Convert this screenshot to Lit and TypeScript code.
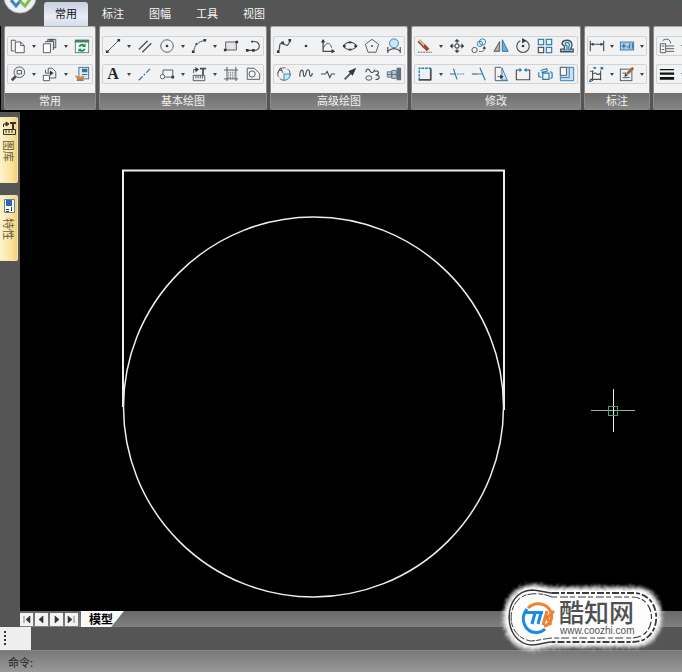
import { LitElement, html, svg, css } from "lit";
import type { SVGTemplateResult } from "lit";
import { customElement, property } from "lit/decorators.js";

// Ribbon icons, each on an 18 x 18 grid.
// Classes: k = dark stroke, b = blue stroke, t = thin, w = heavy, fk / fl = dark, light fill.
const icons: Record<string, SVGTemplateResult> = {
  copy: svg`<path class="k t" d="M5 14.5H1.5V2.5H6V4"/><path class="k" fill="#fafafa" d="M6 4.5h6l4 4V16.5H6z"/><path class="k t" d="M12 4.5v4h4"/>`,
  paste: svg`<path class="k" fill="#ccc" d="M6.5 5V1.5h9V11H13"/><path class="k" fill="#e6e6e6" d="M4 5V4h9v9h-1"/><path class="k" fill="#fff" d="M1.5 6.5h8v10h-8z"/><path class="k w" d="M8 2h5"/>`,
  refresh: svg`<rect x="1.5" y="2.5" width="15" height="14" fill="#f3faf5" stroke="#5c7f72"/><path fill="#477f72" d="M1 2h16v3H1z"/><path stroke="#1c9152" stroke-width="2" fill="none" d="M6 10c1-3 4-3 6-1M12 12c-1 3-4 3-6 1"/><path fill="#1c9152" d="M13 6v4H9zM5 16v-4h4z"/>`,
  zoom: svg`<path class="k" stroke-width="3" d="M6.5 11.5 2 16"/><circle class="k" fill="#e8eef3" cx="10.5" cy="7" r="6"/><path class="k t" d="M8 5h5v4H8z"/>`,
  block: svg`<path class="k" fill="#eee" d="M8.5 13.5H15.5V6.5l-4-4H7v5"/><path class="k" fill="#fff" d="M1.5 10.5h7v6h-7z"/><path class="k" d="M4 4v4h6"/><path class="fk" d="M9 5l4 3-4 3z"/>`,
  brush: svg`<rect x="5.5" y="1.5" width="11" height="13" fill="#dceaf6" stroke="#397199"/><path fill="#397199" d="M9 3h6v4H9zM9 9h6v1H9z"/><path fill="#d28a43" d="M1 10l5 2 6-1-2 5H4z"/><path stroke="#72451e" d="M3 16h8"/>`,
  line: svg`<path class="k" d="M3 15 15 3"/><path class="fk" d="M1 14h3v3H1zM14 1h3v3h-3z"/>`,
  parallel: svg`<path class="k" stroke-width="1.5" d="M2 13 12 3M6 16 16 6"/>`,
  circle: svg`<circle class="k" cx="9" cy="9" r="7"/><circle class="fk" cx="9" cy="9" r="1.5"/>`,
  arc: svg`<path class="k" d="M3 15C4 8 8 4 15 3"/><path class="fk" d="M1 14h3v3H1zM5 6h2v2H5zM14 1h3v3h-3z"/>`,
  rect: svg`<path class="k" fill="#e4e4e4" d="M3 4.5h12v9H3z"/><path class="fk" d="M1 12h3v3H1zM14 3h3v3h-3z"/>`,
  pline: svg`<path class="k" stroke-width="1.3" d="M2 14h8M9 4c9-1 9 10 2 10"/><path class="fk" d="M1 12.5h3v3H1zM8 12.5h3v3H8zM7 3h2v2H7z"/>`,
  text: svg`<text x="9" y="15" class="glyph">A</text>`,
  axis: svg`<path stroke="#306499" stroke-width="1.3" stroke-dasharray="6 2 2 2" fill="none" d="M2 16 16 2"/>`,
  leader: svg`<path class="k" d="M4.5 10V4.5h11v8H7"/><circle class="k" fill="#fff" cx="4" cy="12" r="2.5"/><path class="fk" d="M14 11h3v3h-3z"/>`,
  library: svg`<path class="k" fill="#eee" d="M2.5 10.5h13v6h-13z"/><path class="k t" d="M5.500 11v3M8 11v3M10.500 11v3M13 11v3"/><path class="k w" d="M10 3h7M13.500 3v7"/><path class="k" d="M3 8V4h4"/><path class="fk" d="M5 1l4 3-4 3z"/>`,
  hatch: svg`<path class="k" fill="#e5e5e5" d="M4.5 1v16M14.5 1v16M1 4.5h16M1 14.5h16"/><path class="k t" stroke-dasharray="1 1" d="M6 7h7M6 9h7M6 11h7M6 13h7"/>`,
  region: svg`<path class="k" d="M2.5 2.5h8l6 6v6.5h-14z"/><circle class="k" cx="8" cy="9" r="3.5"/>`,
  spline: svg`<path class="k" stroke-width="1.3" d="M2 15C6 13 2 5 7 6s5 6 9-3"/><path class="fk" d="M1 14h3v3H1zM6 4h3v3H6zM14 1h3v3h-3z"/>`,
  point: svg`<circle class="fk" cx="9" cy="9" r="1.5"/>`,
  formula: svg`<path class="k" stroke-width="1.5" d="M3.5 3v12H16"/><path class="k" d="M4 11C7 4 12 5 13 11"/><path class="fk" d="M1 5l2.5-4L6 5zM13 12.5l4 2.5-4 2.5z"/>`,
  ellipse: svg`<ellipse class="k" stroke-width="1.3" cx="9" cy="9" rx="6.5" ry="4"/><path class="fk" d="M1 7.5h3v3H1zM14 7.5h3v3h-3zM7.5 4h3v2h-3zM7.5 12h3v2h-3z"/>`,
  polygon: svg`<path class="k" d="M9 1.500l7.500 5.500-3 9H4.500l-3-9z"/><circle class="fk" cx="9" cy="9" r="1"/>`,
  bulb: svg`<circle class="b fl" cx="9" cy="6" r="5"/><path class="k" stroke-width="1.3" d="M2 10v7M16 10v7M2 15c4-4 10-4 14 0"/>`,
  detail: svg`<circle class="k" cx="9" cy="9" r="7" stroke-dasharray="7 2"/><path class="b fl" d="M9 9h7c0 4-3 7-7 7z"/><path class="k" d="M2 8l3-6 3 6M3 5h4"/>`,
  wave: svg`<path class="k" stroke-width="1.3" d="M2 12C2 3 6 3 6 8s2 5 3 0 4-5 4 0 3 4 3 0"/>`,
  brk: svg`<path class="k" stroke-width="1.3" d="M1 9h5l2-3 3 7 2-4h4"/>`,
  arrow: svg`<path class="k" stroke-width="2" d="M3 15l8-8"/><path class="fk" d="M7 6l9-4-4 9z"/>`,
  curve: svg`<path class="k" stroke-width="1.3" d="M2 7c1-6 4-3 5-1s4 2 5-2M12 6c5-2 6 4 1 4 6 0 5 6 0 5"/><ellipse class="k" cx="5.5" cy="13.5" rx="3.5" ry="2.5"/>`,
  shaft: svg`<path fill="#b9cbd8" stroke="#5c6c78" d="M1.500 6.5h5v6h-5zM6.500 5h5v9h-5z"/><path fill="#65717a" d="M12 2h5v14h-5z"/><path stroke="#5c6c78" d="M1 9.500h12"/>`,
  erase: svg`<path stroke="#7a4e36" stroke-width="4" d="M2 3l6 6"/><path stroke="#ecc08a" stroke-width="2" d="M2 2l7 7"/><path fill="#a7442d" d="M9 7l5 5-3 3-5-5z"/><path class="k t" stroke-dasharray="2 1" d="M1 16h16"/>`,
  move: svg`<path class="k" stroke-width="1.3" d="M9 3v12M3 9h12"/><path class="fk" d="M6 4l3-3 3 3zM6 14l3 3 3-3zM4 6L1 9l3 3zM14 6l3 3-3 3z"/><rect x="7" y="7" width="4" height="4" fill="#fff" class="k t"/>`,
  clone: svg`<circle class="b" cx="13" cy="4.500" r="3.5"/><circle class="b" cx="10" cy="6.500" r="3"/><circle class="k" cx="4" cy="13.500" r="3"/><path class="k" d="M9 15c5 1 6-1 6-4"/><path class="fk" d="M13 12l2-3 2 3z"/>`,
  mirror: svg`<path fill="#aaa" stroke="#555" d="M7.5 4v11H1z"/><path fill="#66b0df" stroke="#2b6a9b" d="M10.5 2v13H17z"/>`,
  rotate: svg`<path class="k" stroke-width="1.3" d="M6 3a7 7 0 1 0 6 0"/><path class="fk" d="M8 0l5 3-5 3z"/><circle class="fk" cx="9" cy="9" r="1.5"/>`,
  array: svg`<g class="b" stroke-width="1.3"><rect x="1.5" y="1.5" width="6" height="6"/><rect x="10.5" y="1.5" width="6" height="6"/><rect x="10.5" y="10.5" width="6" height="6"/></g><rect class="k" stroke-width="1.3" x="1.5" y="10.5" width="6" height="6"/>`,
  offset: svg`<path class="k" fill="#d5e6f0" stroke-width="1.5" d="M2 15.5h14v-3h-3c3-4 2-10-4-10S2 7 6 9v3.500H2z"/><path class="b" stroke-width="1.3" d="M4 13.500h5V9C6 8 7 5 9 5s4 2 2 5v3.500h3"/>`,
  stretch: svg`<path fill="#e6f1f8" stroke="#287cad" stroke-width="1.5" stroke-dasharray="3 1" d="M2.500 16V2.500H16"/><path class="k" stroke-width="2" d="M2 15.5h14M15.500 3v13"/>`,
  trim: svg`<path class="b" stroke-width="1.3" d="M5 3l4 12"/><path class="k" d="M1 9h6"/><path class="b" stroke-dasharray="2 1" d="M9 9h8"/>`,
  extend: svg`<path class="b" stroke-width="1.3" d="M10 2l6 14"/><path class="k" stroke-width="1.3" d="M1 9h7"/><path class="b" d="M8 9h5"/>`,
  taper: svg`<path class="k" d="M9 1.5H2.5v15H17"/><path class="b fl" d="M10 2l6 14h-6z"/><path class="k" d="M5 12h5"/><path class="fk" d="M8 9.5l4 2.5-4 2.5z"/>`,
  split: svg`<path class="k" stroke-width="1.3" d="M4 4.5H1.5v11h15v-11H14"/><path class="b" stroke-width="1.3" d="M3 4.5h4M11 4.5h4"/><path fill="#287cad" d="M5 2l3 2.5L5 7zM13 2l-3 2.5L13 7z"/>`,
  explode: svg`<path class="b" stroke-width="1.3" d="M6.500 8h7v7h-7zM4 5l7-2 1 3M2 7v5l3 1M15 6l2 2v5l-2 1M5 7l6-1"/>`,
  scale: svg`<path class="b" fill="#c9e0f0" d="M1.5 1.5h15v15h-15z"/><path class="k" fill="#f4f8fb" d="M1.5 1.5h7v9h-7z"/><path class="b" d="M11.500 2v11H2"/>`,
  dim: svg`<path class="k" stroke-width="1.3" d="M1.5 3v12M16.5 3v12M2 7h14"/><path class="fk" d="M2 7l3-2v4zM16 7l-3-2v4z"/>`,
  tolerance: svg`<rect x="1.5" y="4.5" width="15" height="9" fill="#a9d0ed" stroke="#397199"/><path stroke="#1f5380" fill="none" d="M3 9h5M5.5 6v6M10 11v-2M12 6v6M15 6v6"/>`,
  coord: svg`<path class="k" stroke-width="1.3" d="M4 5v12M1 15h13M5 9c3-4 4 4 8-1v8"/><path fill="#397199" d="M5 1h3v2H5zM13 1h3v3h-3zM0 16h3v2H0z"/><path class="k t" d="M1 6h4M13 5v4"/>`,
  edit: svg`<rect class="k" x="1.5" y="3.5" width="13" height="13" fill="#e7f1f7"/><path class="k t" d="M4 8h4M4 13h8"/><path stroke="#a3663a" stroke-width="3" d="M9 9l7-7"/><path fill="#444" d="M6 12l1-4 3 3z"/>`,
  props: svg`<path class="k" fill="#f6f6f6" d="M1.500 6.5h6v10h-6z"/><path class="k" d="M4 3c4-3 9-2 9 3M8 9h9M8 12h9M8 15h9M3 9h3M3 13h3"/>`,
  weight: svg`<path stroke="#111" stroke-width="1.5" d="M1 4h16"/><path stroke="#111" stroke-width="2.5" d="M1 8.500h16"/><path stroke="#111" stroke-width="3" d="M1 14h16"/>`,
};

interface Group {
  label: string;
  compact?: boolean;
  rows: string[];
}

// "v" stands for the drop-down caret of the tool before it.
const groups: Group[] = [
  { label: "常用", rows: ["copy v paste v refresh", "zoom v block v brush"] },
  { label: "基本绘图", rows: ["line v parallel circle v arc v rect pline", "text v axis leader v library v hatch region"] },
  { label: "高级绘图", rows: ["spline point formula ellipse polygon bulb", "detail wave brk arrow curve shaft"] },
  { label: "修改", rows: ["erase v move clone mirror rotate array offset", "stretch v trim extend taper split explode scale"] },
  { label: "标注", compact: true, rows: ["dim v tolerance v", "coord v edit v"] },
  { label: "", rows: ["props v", "weight v"] },
];

const reset = css`
  :host { box-sizing: border-box; }
  *, *::before, *::after { box-sizing: border-box; }
  button {
    margin: 0; padding: 0; border: 0; background: none;
    font: inherit; color: inherit; cursor: pointer;
    display: flex; align-items: center; justify-content: center;
  }
`;

@customElement("ribbon-group")
class RibbonGroup extends LitElement {
  @property({ attribute: false }) group!: Group;

  static styles = [reset, css`
    :host { display: block; flex: none; }
    .group {
      height: 100%; display: flex; flex-direction: column;
      border: 1px solid #8b8b8b; border-top-color: #aaa; border-radius: 2px; overflow: hidden;
    }
    .tools {
      flex: 1; background: linear-gradient(#ededed, #f5f5f5 30%, #f2f2f2);
      padding: 9px 2px; display: flex; flex-direction: column; justify-content: space-between;
    }
    .row {
      display: flex; height: 20px; border-radius: 2px;
      box-shadow: inset 0 0 0 1px #d0d3d6; background: #f1f2f3;
    }
    .tool { width: 22px; height: 20px; }
    .caret { width: 10px; height: 20px; }
    .compact .tool { width: 20px; }
    .caret::before {
      content: ""; border: 2px solid transparent; border-top: 3px solid #444; border-bottom: 0;
    }
    svg { width: 16px; height: 16px; display: block; }
    .k { stroke: #4b4f55; }
    .b { stroke: #287cad; }
    .k:not([fill]), .b:not([fill]) { fill: none; }
    .w { stroke-width: 2; }
    .fk { fill: #33363a; }
    .b.fl { fill: #cfe5f4; }
    .glyph { font: bold 18px "Liberation Serif", serif; text-anchor: middle; fill: #222; }
    .label {
      height: 16px; line-height: 15px; text-align: center; color: #f4f4f4;
      background: linear-gradient(#707070, #858585);
    }
  `];

  render() {
    const { label, rows, compact } = this.group;
    return html`<section class="group ${compact ? "compact" : ""}">
      <div class="tools">
        ${rows.map((row) => html`<div class="row">
          ${row.split(" ").map((name) => name === "v"
            ? html`<button class="caret" aria-label="更多"></button>`
            : html`<button class="tool" aria-label=${name}><svg viewBox="0 0 18 18">${icons[name]}</svg></button>`)}
        </div>`)}
      </div>
      <div class="label">${label}</div>
    </section>`;
  }
}

@customElement("site-mark")
class SiteMark extends LitElement {
  static styles = css`
    :host { display: block; }
    svg { display: block; width: 192px; height: 97px; }
    .name { font: 500 25px "Noto Sans CJK SC", sans-serif; fill: #505050; }
    .url { font: 10px "Liberation Sans", sans-serif; fill: #555; }
  `;
  render() {
    return html`<svg viewBox="0 0 192 97" role="img" aria-label="酷知网">
      <defs>
        <filter id="rough" x="-10%" y="-20%" width="120%" height="140%">
          <feTurbulence type="fractalNoise" baseFrequency="0.7" numOctaves="2" seed="4" result="n"/>
          <feDisplacementMap in="SourceGraphic" in2="n" scale="9" xChannelSelector="R" yChannelSelector="G"/>
          <feGaussianBlur stdDeviation="1"/>
        </filter>
      </defs>
      <path filter="url(#rough)" fill="#fff" stroke="#fff" stroke-opacity=".6" stroke-width="6"
        d="M42 12C50 11 55 14 63 14H145C178 14 178 70 145 70H63C56 70 50 73 42 73C7 73 6 13 42 12z"/>
      <path fill="#fdfdfd" d="M42 16H145C170 16 170 68 145 68H42C14 68 14 16 42 16z"/>
      <g fill="none" stroke="#3a3a3a">
        <path stroke-width="1.5" d="M62 67C56 67 50 70 42 70C12 69 11 16 42 15C50 15 55 18 62 18"/>
        <path stroke-width="1" stroke-dasharray="9 2 5 1" d="M62 63C52 64 47 66 40 66C14 60 17 26 36 20C44 18 52 18 62 22"/>
        <path stroke-width="1.8" stroke-dasharray="7 2 4 2" d="M62 18H143C174 18 174 67 143 67H62"/>
        <path stroke-width="1.2" stroke-dasharray="5 3 8 2" d="M62 22H142C168 22 168 63 142 63H62"/>
      </g>
      <g fill="none" stroke-width="3">
        <path stroke="#168be8" d="M37 34C29 44 35 57 46 57.500C50 57.500 53 56 55 54"/>
        <path stroke="#f08032" d="M38 33C45 26 57 28 61 37C63 44 60 50 54 51"/>
        <path stroke="#168be8" d="M36 37.500H53M45 38L42 49M51 38L48 49"/>
        <path stroke="#f08032" d="M57 36L53 50M64 36L57 43L61 50"/>
      </g>
      <text><tspan class="name" x="69" y="47">酷知网</tspan><tspan class="url" x="70" y="59">www.coozhi.com</tspan></text>
    </svg>`;
  }
}

@customElement("app-root")
class AppRoot extends LitElement {
  static styles = [reset, css`
    :host {
      display: flex; flex-direction: column; height: 100vh; position: relative; overflow: hidden;
      background: #555; font: 11px/16px "Noto Sans CJK SC", sans-serif; color: #222;
    }
    .top {
      flex: none; height: 26px; display: flex; overflow: hidden;
      background: linear-gradient(#4a5856, #555 3px);
    }
    .app { width: 44px; height: 26px; align-items: flex-start; justify-content: flex-start; }
    .app svg { width: 44px; height: 26px; display: block; }
    .tabs { display: flex; gap: 3px; padding-top: 2px; }
    .tab { width: 44px; height: 24px; padding-bottom: 2px; color: #f5f5f5; border-radius: 3px 3px 0 0; }
    .tab.on { background: linear-gradient(#c9cedb, #e9edf8 60%, #d5dbeb); color: #111; }
    .ribbon {
      flex: none; display: flex; gap: 3px; height: 84px; padding: 0 0 0 3px;
      border-left: 1px solid #000; overflow: hidden;
    }
    .main { flex: 1; min-height: 0; display: flex; }
    .side {
      flex: none; width: 20px; border-top: 2px solid #000; padding-top: 5px;
      display: flex; flex-direction: column; gap: 12px;
    }
    .dock {
      width: 18px; height: 66px; padding-top: 2px; flex-direction: column; justify-content: flex-start; gap: 4px;
      background: linear-gradient(90deg, #fdf3cf, #fbe29a 70%, #f3cf78);
      border: 1px solid #f5e4b0; border-left: 0; border-radius: 0 2px 2px 0; color: #665a3c;
    }
    .dock svg { width: 16px; height: 16px; display: block; }
    .dock span { writing-mode: vertical-rl; text-orientation: sideways; }
    .canvas { flex: 1; min-width: 0; background: #000; display: block; }
    .sheets {
      flex: none; height: 16px; margin-left: 20px; display: flex; align-items: center;
      background: linear-gradient(#686868, #808080);
    }
    .nav { display: flex; gap: 2px; }
    .nav button { width: 13px; height: 13px; background: #f2f2f2; color: #333; }
    .nav svg { width: 9px; height: 9px; display: block; }
    .sheet {
      width: 43px; height: 16px; margin-left: 3px; padding-left: 8px; justify-content: flex-start;
      background: #fafafa; color: #000; font-weight: bold; font-size: 12px;
      clip-path: polygon(0 0, 100% 0, 70% 100%, 0 100%);
    }
    .strip { flex: none; height: 23px; background: #555; }
    .grip { width: 31px; height: 23px; background: #eee; padding: 4px 0 0 4px; }
    .grip svg { width: 3px; height: 15px; display: block; }
    .command {
      flex: none; height: 22px; display: flex; align-items: center; gap: 4px; padding: 0 8px;
      background: linear-gradient(#787878, #999); border-top: 1px solid #868686;
    }
    .command input { flex: 1; min-width: 0; border: 0; padding: 0; background: none; font: inherit; outline: 0; }
    .mark { position: absolute; right: 0; bottom: 0; }
  `];

  render() {
    return html`
      <header class="top">
        <button class="app" aria-label="菜单">
          <svg viewBox="0 0 44 26">
            <circle cx="20" cy="-3" r="16" fill="#eef1f3" stroke="#b9bdc0"/>
            <path d="M11 0l5 6 5-6" fill="none" stroke="#3f84bd" stroke-width="3"/>
            <path d="M20 1l5 5 6-8" fill="none" stroke="#81bf4a" stroke-width="3"/>
          </svg>
        </button>
        <nav class="tabs">
          ${["常用", "标注", "图幅", "工具", "视图"].map((t, i) => html`<button class="tab ${i ? "" : "on"}">${t}</button>`)}
        </nav>
      </header>
      <div class="ribbon">${groups.map((g) => html`<ribbon-group .group=${g}></ribbon-group>`)}</div>
      <main class="main">
        <aside class="side">
          <button class="dock">
            <svg viewBox="0 0 16 16" fill="none" stroke="#333"><path d="M2.5 9.5h12v5h-12zM5 10v3M8 10v3M11 10v3M2.5 7V4H6"/><path stroke-width="2" d="M9 3h6M12 3v6"/><path fill="#333" d="M5 2l3 2-3 2z"/></svg>
            <span>图库</span>
          </button>
          <button class="dock">
            <svg viewBox="0 0 16 16"><path fill="#f8f8f8" stroke="#5b82a8" d="M3.5 1.5h10v13h-10z"/><path fill="#2f67a8" d="M5 2h6v6H5z"/><path stroke="#333" fill="none" d="M5 11.5h3M10.5 9v4M5 13.5h3"/></svg>
            <span>特性</span>
          </button>
        </aside>
        <svg class="canvas" fill="none" stroke="#eee">
          <path stroke-width="2" d="M103 297V60.5H484V300"/>
          <circle cx="293.5" cy="297" r="190" stroke-width="1.5"/>
          <path stroke="#aaa" d="M571 300.5h44"/>
          <path d="M593.5 279v43"/>
          <rect x="588.5" y="296.5" width="9" height="9" stroke="#45a276"/>
        </svg>
      </main>
      <div class="sheets">
        <div class="nav">
          ${[["首页", "M2 1v7M8 1L4 4.5 8 8z"], ["上一页", "M6 1L2 4.5 6 8z"], ["下一页", "M3 1l4 3.5L3 8z"], ["末页", "M7 1v7M1 1l4 3.5L1 8z"]].map(
            ([name, d]) => html`<button aria-label=${name}><svg viewBox="0 0 9 9" fill="#333" stroke="#333" stroke-width=".6"><path d=${d}/></svg></button>`)}
        </div>
        <button class="sheet">模型</button>
      </div>
      <div class="strip">
        <div class="grip"><svg viewBox="0 0 3 15"><path fill="#333" d="M0 0h2v2H0zM0 4h2v2H0zM0 8h2v2H0zM0 12h2v2H0z"/></svg></div>
      </div>
      <div class="command"><label for="cmd">命令:</label><input id="cmd" type="text"></div>
      <site-mark class="mark"></site-mark>`;
  }
}
